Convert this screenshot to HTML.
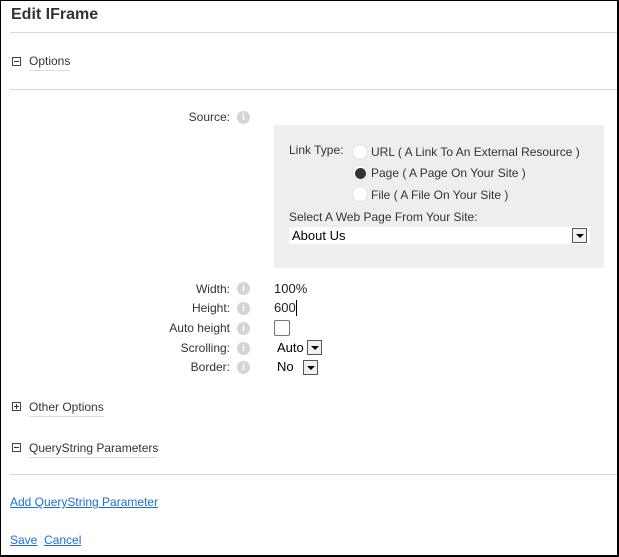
<!DOCTYPE html>
<html><head><meta charset="utf-8"><style>
*{margin:0;padding:0;box-sizing:border-box}
body{width:619px;height:557px;background:#fff;font-family:"Liberation Sans",Arial,sans-serif;font-size:12px;color:#333;position:relative;overflow:hidden}
.frame{position:absolute;left:0;top:0;width:619px;height:557px;border:1px solid #000;border-right:2px solid #000;border-bottom:2px solid #000}
.a{position:absolute;white-space:nowrap}
.hr{position:absolute;left:10px;right:2px;height:1px;background:#d8d8d8}
.tog{position:absolute;width:9px;height:9px;border:1px solid #444}
.tog:before{content:"";position:absolute;left:1px;top:3px;width:5px;height:1px;background:#333}
.plus:after{content:"";position:absolute;left:3px;top:1px;width:1px;height:5px;background:#333}
.sec{position:absolute;font-size:12px;color:#333;border-bottom:1px solid #ddd;padding-bottom:2px;line-height:14px}
.lbl{position:absolute;right:389px;text-align:right;line-height:14px}
.info{position:absolute;left:237px;width:13px;height:13px;border-radius:50%;background:#d4d4d4;color:#fff;font-size:10px;font-weight:bold;text-align:center;line-height:13px;font-family:"Liberation Serif",serif}
.radio{position:absolute;left:352px;width:16px;height:16px;border-radius:50%;background:#fff;border:1px solid #e4e4e4}
.dd{position:absolute;width:15px;height:15px;border:1px solid #555;background:#f0f0f0}
.dd:after{content:"";position:absolute;left:3px;top:5px;border-left:4px solid transparent;border-right:4px solid transparent;border-top:4px solid #000}
a{color:#1a6fd6;text-decoration:underline}
</style></head><body>
<div class="frame"></div>
<div class="a" style="left:11px;top:6px;font-size:16px;font-weight:bold;color:#333">Edit IFrame</div>
<div class="hr" style="top:32px"></div>
<div class="tog" style="left:12px;top:57px"></div>
<div class="sec" style="left:29px;top:54px">Options</div>
<div class="hr" style="top:89px"></div>

<div class="lbl" style="top:110px">Source:</div><div class="info" style="top:111px">i</div>
<div style="position:absolute;left:274px;top:125px;width:330px;height:143px;background:#eee"></div>
<div class="a" style="left:289px;top:143px">Link Type:</div>
<div class="radio" style="top:144px"></div><div class="a" style="left:371px;top:145px">URL ( A Link To An External Resource )</div>
<div class="radio" style="top:165px;border-color:#e4e4e4"></div><div style="position:absolute;left:355px;top:168px;width:11px;height:11px;border-radius:50%;background:#333"></div><div class="a" style="left:371px;top:166px">Page ( A Page On Your Site )</div>
<div class="radio" style="top:186px"></div><div class="a" style="left:371px;top:188px">File ( A File On Your Site )</div>
<div class="a" style="left:289px;top:210px">Select A Web Page From Your Site:</div>
<div style="position:absolute;left:289px;top:227px;width:301px;height:17px;background:#fff"></div>
<div class="a" style="left:292px;top:228px;font-size:13px;color:#000">About Us</div>
<div class="dd" style="left:572px;top:228px"></div>

<div class="lbl" style="top:282px">Width:</div><div class="info" style="top:282px">i</div>
<div class="a" style="left:274px;top:281px;font-size:13px;color:#222">100%</div>
<div class="lbl" style="top:301px">Height:</div><div class="info" style="top:302px">i</div>
<div class="a" style="left:274px;top:300px;font-size:13px;color:#222">600</div><div style="position:absolute;left:296px;top:300px;width:1px;height:16px;background:#000"></div>
<div class="lbl" style="top:321px">Auto height</div><div class="info" style="top:322px">i</div>
<div style="position:absolute;left:274px;top:320px;width:16px;height:16px;border:1px solid #777;border-radius:2px;background:#fff"></div>
<div class="lbl" style="top:341px">Scrolling:</div><div class="info" style="top:342px">i</div>
<div class="a" style="left:277px;top:340px;font-size:13px;color:#000">Auto</div><div class="dd" style="left:307px;top:340px"></div>
<div class="lbl" style="top:360px">Border:</div><div class="info" style="top:361px">i</div>
<div class="a" style="left:277px;top:359px;font-size:13px;color:#000">No</div><div class="dd" style="left:303px;top:360px"></div>

<div class="tog plus" style="left:12px;top:402px"></div>
<div class="sec" style="left:29px;top:400px">Other Options</div>
<div class="tog" style="left:12px;top:443px"></div>
<div class="sec" style="left:29px;top:441px">QueryString Parameters</div>
<div class="hr" style="top:474px"></div>
<div class="a" style="left:10px;top:495px"><a>Add QueryString Parameter</a></div>
<div class="a" style="left:10px;top:533px"><a>Save</a>&nbsp; <a>Cancel</a></div>
</body></html>
